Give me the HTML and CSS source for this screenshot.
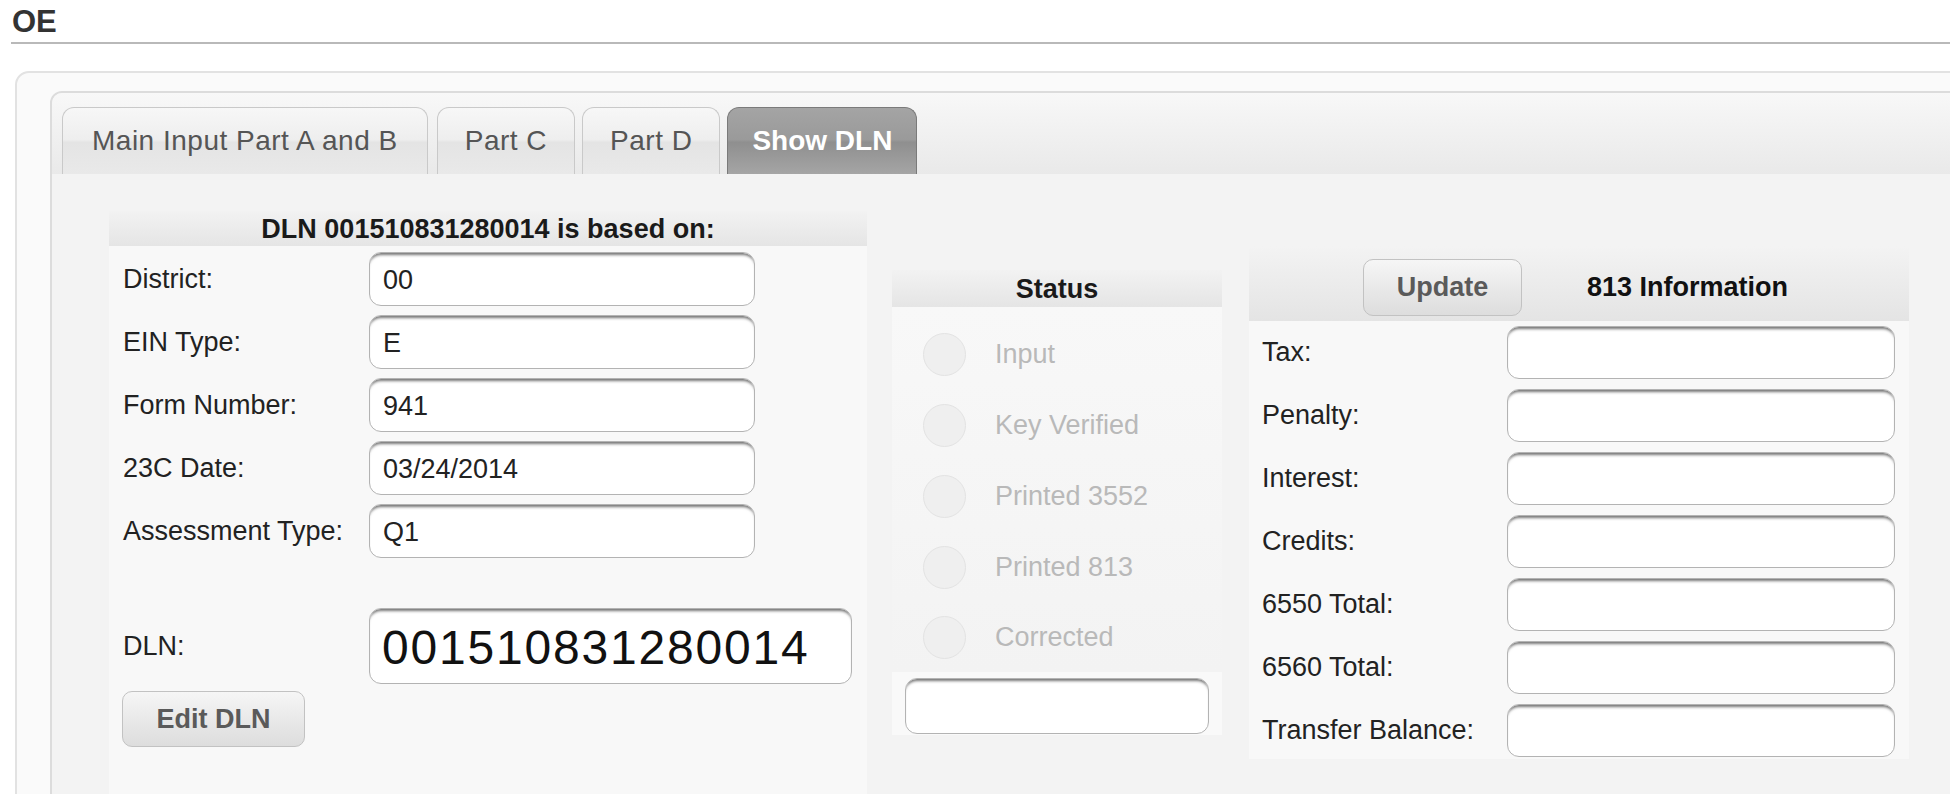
FILE: index.html
```html
<!DOCTYPE html>
<html>
<head>
 <meta charset="utf-8"/>
 <title>OE</title>
 <link rel="stylesheet" href="styles.css">
</head>
<body>

<h1 class="page-title">OE</h1>

<!-- _______________________________________________________________ -->
<div class="frame">
 <div class="tabs">
  <ul class="tab-bar">
   <li class="tab">Main Input Part A and B</li>
   <li class="tab">Part C</li>
   <li class="tab">Part D</li>
   <li class="tab active">Show DLN</li>
  </ul>

  <div class="tab-body">

   <!-- DLN source fields -->
   <section class="dln-box">
    <div class="box-head">DLN 001510831280014 is based on:</div>
    <div class="fields">
     <div class="row"><label>District:</label><input class="field" type="text" value="00"></div>
     <div class="row"><label>EIN Type:</label><input class="field" type="text" value="E"></div>
     <div class="row"><label>Form Number:</label><input class="field" type="text" value="941"></div>
     <div class="row"><label>23C Date:</label><input class="field" type="text" value="03/24/2014"></div>
     <div class="row"><label>Assessment Type:</label><input class="field" type="text" value="Q1"></div>
     <div class="row dln-row"><label>DLN:</label><input class="field dln-field" type="text" value="001510831280014"></div>
     <button class="btn edit-btn">Edit DLN</button>
    </div>
   </section>

   <!-- status -->
   <section class="status-box">
    <div class="box-head">Status</div>
    <ul class="status-list">
     <li><span class="dot"></span>Input</li>
     <li><span class="dot"></span>Key Verified</li>
     <li><span class="dot"></span>Printed 3552</li>
     <li><span class="dot"></span>Printed 813</li>
     <li><span class="dot"></span>Corrected</li>
    </ul>
    <div class="status-foot"><input class="field status-field" type="text" value=""></div>
   </section>

   <!-- 813 info -->
   <section class="info-box">
    <div class="info-head">
     <button class="btn update-btn">Update</button>
     <span class="info-title">813 Information</span>
    </div>
    <div class="info-fields">
     <div class="row"><label>Tax:</label><input class="field" type="text"></div>
     <div class="row"><label>Penalty:</label><input class="field" type="text"></div>
     <div class="row"><label>Interest:</label><input class="field" type="text"></div>
     <div class="row"><label>Credits:</label><input class="field" type="text"></div>
     <div class="row"><label>6550 Total:</label><input class="field" type="text"></div>
     <div class="row"><label>6560 Total:</label><input class="field" type="text"></div>
     <div class="row"><label>Transfer Balance:</label><input class="field" type="text"></div>
    </div>
   </section>

  </div>
 </div>
</div>

</body>
</html>
```

FILE: styles.css
```css
body {
 margin: 0;
 background: #fff;
 overflow: hidden;
 font-family: "Liberation Sans", Arial, sans-serif;
 font-size: 27px;
 color: #222;
}
.page-title {
 margin: 0 0 0 11px;
 padding: 5px 0 3px 1px;
 font-size: 31px;
 line-height: 34px;
 font-weight: bold;
 color: #333;
 border-bottom: 2px solid #b9b9b9;
}

/* outer rounded frame */
.frame {
 margin: 27px -80px 0 15px;
 padding: 18px 0 0 33px;
 height: 800px;
 border: 2px solid #e2e2e2;
 border-radius: 14px;
 background: #fafafa;
}
.tabs {
 border: 2px solid #dcdcdc;
 border-radius: 12px;
 background: #f3f3f3;
 height: 760px;
 overflow: hidden;
}
.tab-bar {
 display: flex;
 gap: 7px;
 list-style: none;
 margin: 0;
 padding: 14px 0 0 10px;
 background: linear-gradient(#f8f8f8, #e9e9e9);
}
.tab {
 height: 67px;
 line-height: 66px;
 padding: 0 27px;
 box-sizing: border-box;
 font-size: 28px;
 letter-spacing: 0.5px;
 color: #555;
 border: 1px solid #c9c9c9;
 border-bottom: none;
 border-radius: 12px 12px 0 0;
 background: linear-gradient(#f7f7f7, #eeeeee 48%, #e4e4e4 52%, #e9e9e9);
}
.tab:first-child {
 padding: 0 29px;
 margin-right: 2px;
}
.tab.active {
 color: #fff;
 font-weight: bold;
 letter-spacing: 0;
 padding: 0 24px;
 border-color: #7a7a7a;
 background: linear-gradient(#a4a4a4, #9a9a9a 48%, #8f8f8f 52%, #a5a5a5);
}

.tab-body {
 display: flex;
 align-items: flex-start;
 padding: 37px 0 0 57px;
 background: #f3f3f3;
}

.box-head {
 height: 35px;
 line-height: 36px;
 text-align: center;
 font-weight: bold;
 color: #1a1a1a;
 background: linear-gradient(#f2f2f2, #e5e5e5);
}

/* inputs + buttons */
.field {
 box-sizing: border-box;
 height: 54px;
 width: 386px;
 padding: 3px 13px 0 13px;
 font-family: "Liberation Sans", Arial, sans-serif;
 font-size: 27px;
 color: #222;
 background: #fff;
 border: 1px solid #b3b3b3;
 border-radius: 12px;
 box-shadow: inset 0 4px 3px -2px rgba(0,0,0,0.55);
 outline: none;
}
.btn {
 box-sizing: border-box;
 font-family: "Liberation Sans", Arial, sans-serif;
 font-size: 27px;
 font-weight: bold;
 color: #5a5a5a;
 border: 1px solid #c2c2c2;
 border-radius: 10px;
 background: linear-gradient(#f6f6f6, #e9e9e9 50%, #dddddd);
 padding: 0;
}

.row {
 display: flex;
 align-items: center;
 margin-bottom: 9px;
}
.row label {
 flex: none;
}

/* left: DLN */
.dln-box {
 width: 758px;
 height: 620px;
 background: #f8f8f8;
}
.fields {
 padding: 6px 0 0 14px;
}
.fields .row label {
 width: 246px;
}
.dln-row {
 margin-top: 50px;
}
.dln-field {
 width: 483px;
 height: 76px;
 font-size: 48px;
 letter-spacing: 1.8px;
 padding-left: 12px;
 color: #111;
}
.edit-btn {
 width: 183px;
 height: 56px;
 margin: -2px 0 0 -1px;
}

/* middle: status */
.status-box {
 width: 330px;
 margin: 59px 0 0 25px;
}
.status-box .box-head {
 height: 37px;
 line-height: 38px;
}
.status-list {
 list-style: none;
 margin: 0;
 padding: 12px 0 0 0;
 background: linear-gradient(#f8f8f8, #f3f3f3);
}
.status-list li {
 display: flex;
 align-items: center;
 height: 71px;
 padding-left: 31px;
 color: #b9b9b9;
}
.status-list li:last-child {
 height: 69px;
}
.dot {
 width: 41px;
 height: 41px;
 margin-right: 29px;
 border: 1px solid #e3e3e3;
 border-radius: 50%;
 background: #efefef;
}
.status-foot {
 padding: 6px 13px 1px 13px;
 background: #f9f9f9;
}
.status-field {
 width: 304px;
 height: 56px;
}

/* right: 813 information */
.info-box {
 width: 660px;
 margin: 35px 0 0 27px;
 background: #f8f8f8;
}
.info-head {
 display: flex;
 align-items: flex-end;
 height: 75px;
 box-sizing: border-box;
 padding: 0 0 5px 114px;
 background: linear-gradient(#f3f3f3, #e4e4e4);
}
.update-btn {
 width: 159px;
 height: 57px;
}
.info-title {
 margin-left: 65px;
 line-height: 57px;
 font-weight: bold;
 color: #111;
}
.info-fields {
 padding: 5px 0 2px 13px;
}
.info-fields .row {
 margin-bottom: 10px;
}
.info-fields .row:last-child {
 margin-bottom: 0;
}
.info-fields .row label {
 width: 245px;
}
.info-fields .field {
 width: 388px;
 height: 53px;
}
```
